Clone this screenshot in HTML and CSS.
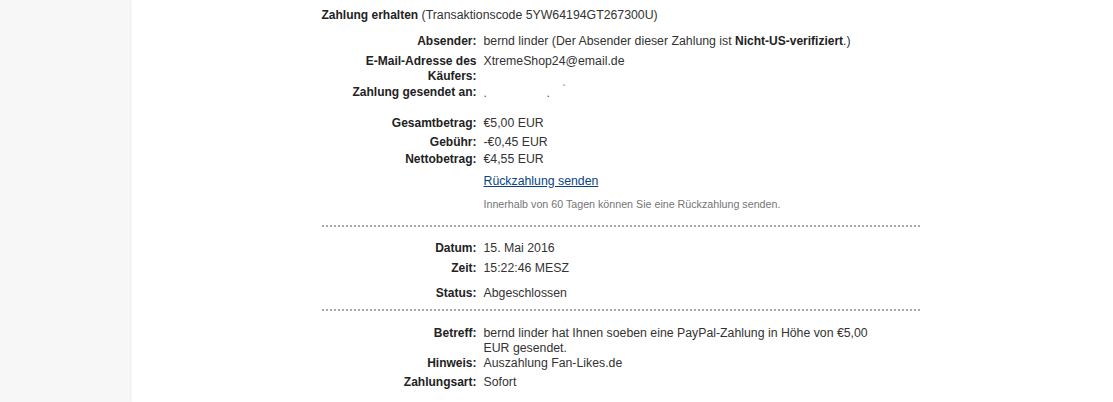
FILE: index.html
```html
<!DOCTYPE html>
<html lang="de">
<head>
<meta charset="utf-8">
<title>Transaktionsdetails</title>
<link rel="stylesheet" href="styles.css">
</head>
<body>
<div class="page">
  <aside class="sidebar"></aside>
  <main class="main">
    <div class="details">
      <div class="head"><b>Zahlung erhalten</b> (Transaktionscode 5YW64194GT267300U)</div>

      <div class="row mt11">
        <div class="label">Absender:</div>
        <div class="value">bernd linder (Der Absender dieser Zahlung ist <b>Nicht-US-verifiziert</b>.)</div>
      </div>
      <div class="row mt5">
        <div class="label">E-Mail-Adresse des Käufers:</div>
        <div class="value">XtremeShop24@email.de</div>
      </div>
      <div class="row mt1">
        <div class="label">Zahlung gesendet an:</div>
        <div class="value redacted"><span class="dot">.</span><span class="dot d2">.</span><span class="tick">`</span></div>
      </div>

      <div class="row mt16">
        <div class="label">Gesamtbetrag:</div>
        <div class="value">€5,00 EUR</div>
      </div>
      <div class="row mt4">
        <div class="label">Gebühr:</div>
        <div class="value">-€0,45 EUR</div>
      </div>
      <div class="row mt2">
        <div class="label">Nettobetrag:</div>
        <div class="value">€4,55 EUR</div>
      </div>
      <div class="row mt7">
        <div class="label"></div>
        <div class="value"><a class="link" href="#">Rückzahlung senden</a></div>
      </div>
      <div class="row mt9">
        <div class="label"></div>
        <div class="value note">Innerhalb von 60 Tagen können Sie eine Rückzahlung senden.</div>
      </div>

      <div class="divider mt14"></div>

      <div class="row mt14">
        <div class="label">Datum:</div>
        <div class="value">15. Mai 2016</div>
      </div>
      <div class="row mt5">
        <div class="label">Zeit:</div>
        <div class="value">15:22:46 MESZ</div>
      </div>
      <div class="row mt10">
        <div class="label">Status:</div>
        <div class="value">Abgeschlossen</div>
      </div>

      <div class="divider mt8"></div>

      <div class="row mt15">
        <div class="label">Betreff:</div>
        <div class="value">bernd linder hat Ihnen soeben eine PayPal-Zahlung in Höhe von €5,00 EUR gesendet.</div>
      </div>
      <div class="row">
        <div class="label">Hinweis:</div>
        <div class="value">Auszahlung Fan-Likes.de</div>
      </div>
      <div class="row mt4">
        <div class="label">Zahlungsart:</div>
        <div class="value">Sofort</div>
      </div>
    </div>
  </main>
</div>
</body>
</html>
```

FILE: styles.css
```css
html, body {
  margin: 0;
  padding: 0;
  height: 100%;
  background: #ffffff;
}

body {
  font-family: "Liberation Sans", Arial, sans-serif;
  font-size: 12.3px;
  color: #333333;
  overflow: hidden;
}

.page {
  display: flex;
  height: 402px;
}

.sidebar {
  width: 130px;
  flex: 0 0 130px;
  background: #f7f7f7;
  box-shadow: 1px 0 2px rgba(0, 0, 0, 0.09);
  position: relative;
  z-index: 1;
}

.main {
  flex: 1 1 auto;
  background: #ffffff;
}

.details {
  width: 600px;
  margin: 0 auto;
  padding-top: 8px;
}

.head {
  height: 15px;
  line-height: 15px;
}

.head b,
.value b {
  font-weight: bold;
  font-size: 12px;
  line-height: 12px;
  color: #222222;
}

.row {
  display: grid;
  grid-template-columns: 155px 390px;
  column-gap: 7px;
  line-height: 15px;
}

.label {
  text-align: right;
  font-weight: bold;
  font-size: 12px;
  color: #222222;
}

.redacted {
  height: 15px;
}

.dot {
  display: inline-block;
  width: 4px;
  color: #555555;
}

.dot.d2 {
  margin-left: 59px;
}

.tick {
  display: inline-block;
  margin-left: 12px;
  color: #555555;
  font-size: 10px;
  line-height: 10px;
  vertical-align: 4px;
}

.link {
  color: #084482;
  text-decoration: underline;
}

.note {
  font-size: 10.7px;
  line-height: 13px;
  color: #757575;
}

.divider {
  height: 2px;
  background-image: repeating-linear-gradient(to right, #a9a9a9 0, #a9a9a9 2px, transparent 2px, transparent 4px);
}

.mt1 { margin-top: 1px; }
.mt2 { margin-top: 2px; }
.mt4 { margin-top: 4px; }
.mt5 { margin-top: 5px; }
.mt7 { margin-top: 7px; }
.mt8 { margin-top: 8px; }
.mt9 { margin-top: 9px; }
.mt10 { margin-top: 10px; }
.mt11 { margin-top: 11px; }
.mt14 { margin-top: 14px; }
.mt15 { margin-top: 15px; }
.mt16 { margin-top: 16px; }
```
